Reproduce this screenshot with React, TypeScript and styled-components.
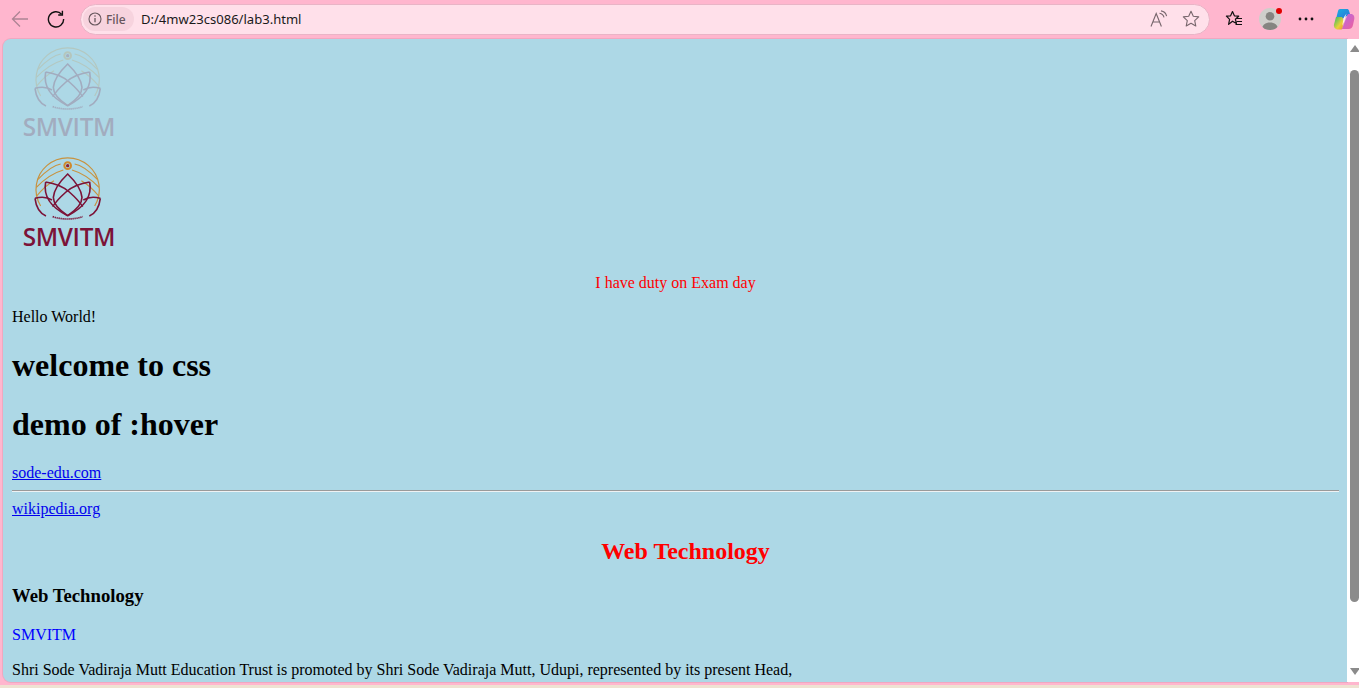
import React from "react";
import styled, { createGlobalStyle } from "styled-components";

const Global = createGlobalStyle`
  html, body { margin: 0; padding: 0; height: 100%; overflow: hidden; }
  #root { height: 100%; }
`;

const Frame = styled.div`
  width: 1359px;
  height: 688px;
  display: flex;
  flex-direction: column;
  background: #ffb6ce;
  overflow: hidden;
`;

const Toolbar = styled.header`
  height: 39px;
  flex: none;
  display: flex;
  align-items: center;
  padding: 0 0 1px 2px;
  box-sizing: border-box;
`;

const ToolButton = styled.div`
  width: 36px;
  height: 32px;
  flex: none;
  display: flex;
  align-items: center;
  justify-content: center;
  position: relative;
`;

const CopilotButton = styled(ToolButton)`
  width: 33px;
  justify-content: flex-end;
  padding-right: 4px;
  margin-left: 2px;
  box-sizing: border-box;
`;

const AddressBar = styled.div`
  flex: 1;
  height: 31px;
  margin: 0 6px;
  box-sizing: border-box;
  border: 1px solid #e9b4c6;
  border-radius: 16px;
  background: #ffe0ea;
  display: flex;
  align-items: center;
  padding: 0 9px 0 2px;
  font-family: "Noto Sans", "Open Sans", sans-serif;
`;

const SiteChip = styled.div`
  width: 51px;
  height: 24px;
  box-sizing: border-box;
  border-radius: 12px;
  background: #f7d3de;
  display: flex;
  align-items: center;
  gap: 4px;
  padding-left: 5px;
  font-size: 12px;
  font-weight: 500;
  color: #66565c;
`;

const Url = styled.span`
  flex: 1;
  margin-left: 7px;
  font-size: 13.05px;
  color: #1a1a1a;
`;

const BarIcons = styled.div`
  display: flex;
  align-items: center;
  gap: 14px;
`;

const Avatar = styled.div`
  width: 22px;
  height: 22px;
  border-radius: 50%;
  background: #cfcfcb;
  overflow: hidden;
  display: flex;
`;

const Badge = styled.span`
  position: absolute;
  top: 5px;
  left: 24px;
  width: 6px;
  height: 6px;
  border-radius: 50%;
  background: #e00000;
`;

const Body = styled.div`
  flex: 1;
  min-height: 0;
  display: flex;
  margin: 0 0 3px 3px;
`;

const Viewport = styled.main`
  flex: 1;
  min-width: 0;
  background: #add8e6;
  border-radius: 8px 0 0 8px;
  box-shadow: 0 0 0 1px #f0a8c0;
  overflow: hidden;
  box-sizing: border-box;
  padding: 1px 8px 0 9px;
  font-family: "Liberation Serif", "Times New Roman", serif;
  font-size: 16px;
  color: #000;
`;

const Scrollbar = styled.aside`
  width: 12px;
  flex: none;
  background: #fff;
  display: flex;
  flex-direction: column;
  align-items: center;
  padding: 6px 0 7px;
  box-sizing: border-box;
  justify-content: space-between;
`;

const Thumb = styled.div`
  width: 9px;
  height: 532px;
  margin: 18px 0 auto 2px;
  border-radius: 5px;
  background: #8b8b8b;
`;

const Arrow = styled.span<{ $up?: boolean }>`
  width: 0;
  height: 0;
  margin-left: 3px;
  border-left: 5px solid transparent;
  border-right: 5px solid transparent;
  ${(p) => (p.$up ? "border-bottom: 7px solid #8b8b8b;" : "border-top: 7px solid #8b8b8b;")}
`;

const BottomStrip = styled.div`
  height: 3px;
  flex: none;
  background: #efe2d2;
`;

const LogoGraphic = styled.svg<{ $faded?: boolean }>`
  display: block;
  width: 110px;
  height: 105px;
  margin-bottom: 5px;
  opacity: ${(p) => (p.$faded ? 0.22 : 1)};
`;

const Notice = styled.p`
  margin: 19px 0 15px;
  text-align: center;
  color: red;
`;

const Para = styled.p`
  margin: 16px 0;
`;

const Heading = styled.h1`
  margin: 21.44px 0;
  font-size: 32px;
  font-weight: bold;
`;

const LinkLine = styled.div``;

const PageLink = styled.a`
  color: #0000ee;
  text-decoration: underline;
`;

const Rule = styled.hr`
  margin: 8px 0;
  border: none;
  border-top: 1px solid #9a9a9a;
  border-bottom: 1px solid #eef2f4;
`;

const RedTitle = styled.h2`
  margin: 19.92px 0;
  padding-left: 20px;
  text-align: center;
  font-size: 24px;
  font-weight: bold;
  color: red;
`;

const SubTitle = styled.h3`
  margin: 18.72px 0;
  font-size: 18.72px;
  font-weight: bold;
`;

const BluePara = styled.p`
  margin: 18px 0 17px;
  color: blue;
`;

const Logo = ({ faded }: { faded?: boolean }) => {
  const gold = "#c8923e";
  const maroon = "#7c1338";
  return (
    <LogoGraphic $faded={faded} viewBox="6 0 330 315">
      <g fill="none" stroke={gold} strokeWidth="3.6">
        <path d="M92 168 A95 95 0 1 1 254 168" />
        <path d="M84 88 Q125 46 152 42" />
        <path d="M194 42 Q221 46 262 88" />
        <path d="M79 112 Q118 72 160 60" />
        <path d="M186 60 Q228 72 267 112" />
        <path d="M80 138 Q104 108 132 92" />
        <path d="M214 92 Q242 108 266 138" />
        <circle cx="173" cy="47" r="10" stroke="#d08a2c" strokeWidth="6" />
        <circle cx="173" cy="47" r="5" fill="#8a2038" stroke="none" />
      </g>
      <g fill="none" stroke={maroon} strokeWidth="4.8">
        <path d="M173 72 C146 98 132 118 130 142 C130 164 150 182 173 197 C196 182 216 164 216 142 C214 118 200 98 173 72Z" />
        <path d="M107 96 C100 134 118 170 173 197" />
        <path d="M239 96 C246 134 228 170 173 197" />
        <path d="M107 96 C135 100 160 110 178 126 C196 142 208 154 218 170" />
        <path d="M239 96 C211 100 186 110 168 126 C150 142 138 154 128 170" />
        <path d="M75 145 C78 170 86 188 108 198" />
        <path d="M271 145 C268 170 260 188 238 198" />
        <path d="M75 145 C95 139 112 141 126 150" />
        <path d="M271 145 C251 139 234 141 220 150" />
      </g>
      <path d="M128 200 Q173 214 218 200" fill="none" stroke={maroon} strokeWidth="5" strokeDasharray="4 2" />
      <text
        x="38"
        y="288"
        fill={maroon}
        fontFamily="'Open Sans', Lato, sans-serif"
        fontWeight="600"
        fontSize="73"
        letterSpacing="-1"
      >
        SMVITM
      </text>
    </LogoGraphic>
  );
};

const BackIcon = () => (
  <svg width="20" height="20" viewBox="0 0 20 20" fill="none" stroke="#ad8494" strokeWidth="1.3">
    <path d="M18 10H2.500M10 2.500 2.500 10l7.500 7.500" />
  </svg>
);

const ReloadIcon = () => (
  <svg width="18" height="18" viewBox="0 0 18 18" fill="none" stroke="#111" strokeWidth="1.4">
    <path d="M14.600 4.200A7.600 7.600 0 1 0 16.600 9" />
    <path d="M15.400 0.800V5H11.200" />
  </svg>
);

const InfoIcon = () => (
  <svg width="14" height="14" viewBox="0 0 14 14" fill="none" stroke="#66565c" strokeWidth="1.1">
    <circle cx="7" cy="7" r="6" />
    <path d="M7 6v4.200" strokeWidth="1.3" />
    <circle cx="7" cy="4" r=".8" fill="#66565c" stroke="none" />
  </svg>
);

const ReadAloudIcon = () => (
  <svg width="18" height="18" viewBox="0 0 18 18" fill="none" stroke="#77666c" strokeWidth="1.1">
    <path d="M1 16.500 6.200 3.500l5.200 13M2.800 12h6.800" />
    <path d="M9.500 3.200c2.400.4 4 2 4.500 4.200M11 .9c3 .5 5 2.600 5.600 5.300" />
  </svg>
);

const StarIcon = () => (
  <svg width="18" height="18" viewBox="0 0 18 18" fill="none" stroke="#77666c" strokeWidth="1.1" strokeLinejoin="round">
    <path d="M9 1.300l2.300 5 5.400.6-4 3.700 1.100 5.400L9 13.300 4.200 16l1.100-5.400-4-3.700 5.400-.6z" />
  </svg>
);

const FavoritesIcon = () => (
  <svg width="18" height="18" viewBox="0 0 18 18" fill="none" stroke="#111" strokeWidth="1.2" strokeLinejoin="round">
    <path d="M7.500 1.500 9.400 5.800l4.300.4-3.300 3 1 4.400-3.900-2.400-3.900 3.200 1-5L1.400 6.200l4.200-.4z" />
    <path d="M11.500 8.500H17M11.500 11.500H17M10.500 14.500H17" />
  </svg>
);

const AvatarIcon = () => (
  <svg width="22" height="22" viewBox="0 0 22 22" fill="#858581">
    <circle cx="11" cy="8.300" r="4.300" />
    <path d="M3 22c0-5.500 3.500-7.500 8-7.500s8 2 8 7.500z" />
  </svg>
);

const MoreIcon = () => (
  <svg width="16" height="4" viewBox="0 0 16 4" fill="#111">
    <circle cx="2" cy="2" r="1.400" />
    <circle cx="8" cy="2" r="1.400" />
    <circle cx="14" cy="2" r="1.400" />
  </svg>
);

const CopilotIcon = () => (
  <svg width="22" height="22" viewBox="0 0 22 22">
    <defs>
      <linearGradient id="cpA" x1="0" y1="0" x2="1" y2="1">
        <stop offset="0" stopColor="#1ab0e0" />
        <stop offset="1" stopColor="#2e6fd8" />
      </linearGradient>
      <linearGradient id="cpB" x1="0" y1="0" x2="1" y2="1">
        <stop offset="0" stopColor="#2fb86a" />
        <stop offset="0.6" stopColor="#e8d23a" />
        <stop offset="1" stopColor="#f08a3a" />
      </linearGradient>
      <linearGradient id="cpC" x1="0" y1="0" x2="1" y2="1">
        <stop offset="0" stopColor="#b46ae8" />
        <stop offset="1" stopColor="#f0609a" />
      </linearGradient>
    </defs>
    <path d="M7 1h7c1 0 1.600.6 1.900 1.400L17 6 9 11 3 11 5 3c.3-1.200 1-2 2-2z" fill="url(#cpA)" />
    <path d="M3 9h6l2 4-1.500 7.500c-.2.8-.8 1-1.500 1H5c-3 0-4.500-2.500-4-5z" fill="url(#cpB)" />
    <path d="M15 6h3c2.500 0 3.800 2.500 3.300 5l-1.300 6c-.5 2.500-2 4-4.500 4H9l3-8z" fill="url(#cpC)" />
    <path d="M13.500 5.500 11 14l-2 4 2-9z" fill="#fff" opacity=".85" />
  </svg>
);

export default function App() {
  return (
    <Frame>
      <Global />
      <Toolbar>
        <ToolButton><BackIcon /></ToolButton>
        <ToolButton><ReloadIcon /></ToolButton>
        <AddressBar>
          <SiteChip><InfoIcon />File</SiteChip>
          <Url>D:/4mw23cs086/lab3.html</Url>
          <BarIcons>
            <ReadAloudIcon />
            <StarIcon />
          </BarIcons>
        </AddressBar>
        <ToolButton><FavoritesIcon /></ToolButton>
        <ToolButton>
          <Avatar><AvatarIcon /></Avatar>
          <Badge />
        </ToolButton>
        <ToolButton><MoreIcon /></ToolButton>
        <CopilotButton><CopilotIcon /></CopilotButton>
      </Toolbar>
      <Body>
        <Viewport>
          <Logo faded />
          <Logo />
          <Notice>I have duty on Exam day</Notice>
          <Para>Hello World!</Para>
          <Heading>welcome to css</Heading>
          <Heading>demo of :hover</Heading>
          <LinkLine><PageLink href="#">sode-edu.com</PageLink></LinkLine>
          <Rule />
          <LinkLine><PageLink href="#">wikipedia.org</PageLink></LinkLine>
          <RedTitle>Web Technology</RedTitle>
          <SubTitle>Web Technology</SubTitle>
          <BluePara>SMVITM</BluePara>
          <Para>Shri Sode Vadiraja Mutt Education Trust is promoted by Shri Sode Vadiraja Mutt, Udupi, represented by its present Head,</Para>
        </Viewport>
        <Scrollbar>
          <Arrow $up />
          <Thumb />
          <Arrow />
        </Scrollbar>
      </Body>
      <BottomStrip />
    </Frame>
  );
}
